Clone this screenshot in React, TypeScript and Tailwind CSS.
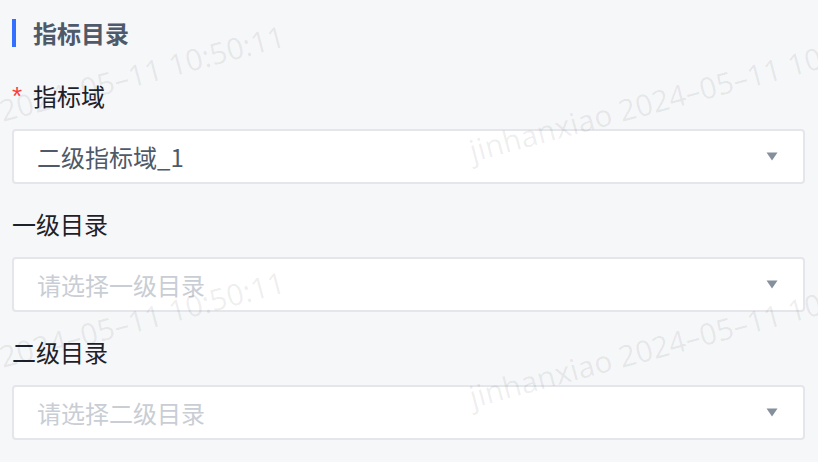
import React from "react";

const font = '"Noto Sans CJK SC", "Noto Sans", sans-serif';

function Caret() {
  return (
    <svg width="12" height="9" viewBox="0 0 12 9" className="shrink-0">
      <path d="M0.5 0.5 H11.5 L6 8.5 Z" fill="#86909c" />
    </svg>
  );
}

function SelectBox({ value, placeholder }: { value?: string; placeholder: string }) {
  return (
    <div className="flex h-[55px] items-center justify-between rounded-[4px] border-2 border-[#e5e6eb] bg-white pl-[23px] pr-[25px]">
      {value ? (
        <span className="text-[24px] leading-[28px] text-[#4e5969]">{value}</span>
      ) : (
        <span className="text-[24px] leading-[28px] text-[#c9cdd4]">{placeholder}</span>
      )}
      <Caret />
    </div>
  );
}

function Label({ text, required }: { text: string; required?: boolean }) {
  return (
    <div className="flex h-[28px] items-center text-[24px] leading-[28px] text-[#1d2129]">
      {required && (
        <span
          className="w-[21px] text-[26px] leading-[28px] text-[#f53f3f]"
          style={{ fontFamily: '"Liberation Sans", sans-serif' }}
        >
          *
        </span>
      )}
      <span>{text}</span>
    </div>
  );
}

const marks = [
  "left-[-146px] top-[136px]",
  "left-[473px] top-[136px]",
  "left-[-146px] top-[382px]",
  "left-[473px] top-[382px]",
];

export default function App() {
  return (
    <div className="relative min-h-screen overflow-hidden bg-[#f6f7f9]" style={{ fontFamily: font }}>
      <div className="pl-3 pr-[13px] pt-[19px]">
        <div className="flex h-[28px] items-center gap-[17px]">
          <div className="h-[28px] w-[4px] bg-[#3370ff]" />
          <h2 className="text-[24px] font-bold leading-[28px] text-[#4e5969]">指标目录</h2>
        </div>

        <div className="mt-[35px]">
          <Label text="指标域" required />
        </div>
        <div className="mt-[19px]">
          <SelectBox value="二级指标域_1" placeholder="请选择指标域" />
        </div>

        <div className="mt-[26px]">
          <Label text="一级目录" />
        </div>
        <div className="mt-[19px]">
          <SelectBox placeholder="请选择一级目录" />
        </div>

        <div className="mt-[26px]">
          <Label text="二级目录" />
        </div>
        <div className="mt-[19px]">
          <SelectBox placeholder="请选择二级目录" />
        </div>
      </div>

      {/* watermark */}
      <div className="pointer-events-none absolute inset-0 z-10 overflow-hidden">
        {marks.map((pos) => (
          <span
            key={pos}
            className={`absolute ${pos} origin-[0_27px] rotate-[-15deg] whitespace-nowrap text-[30px] leading-none text-black/[0.065]`}
            style={{ fontFamily: '"Noto Sans", sans-serif' }}
          >
            jinhanxiao 2024–05–11 10:50:11
          </span>
        ))}
      </div>
    </div>
  );
}
